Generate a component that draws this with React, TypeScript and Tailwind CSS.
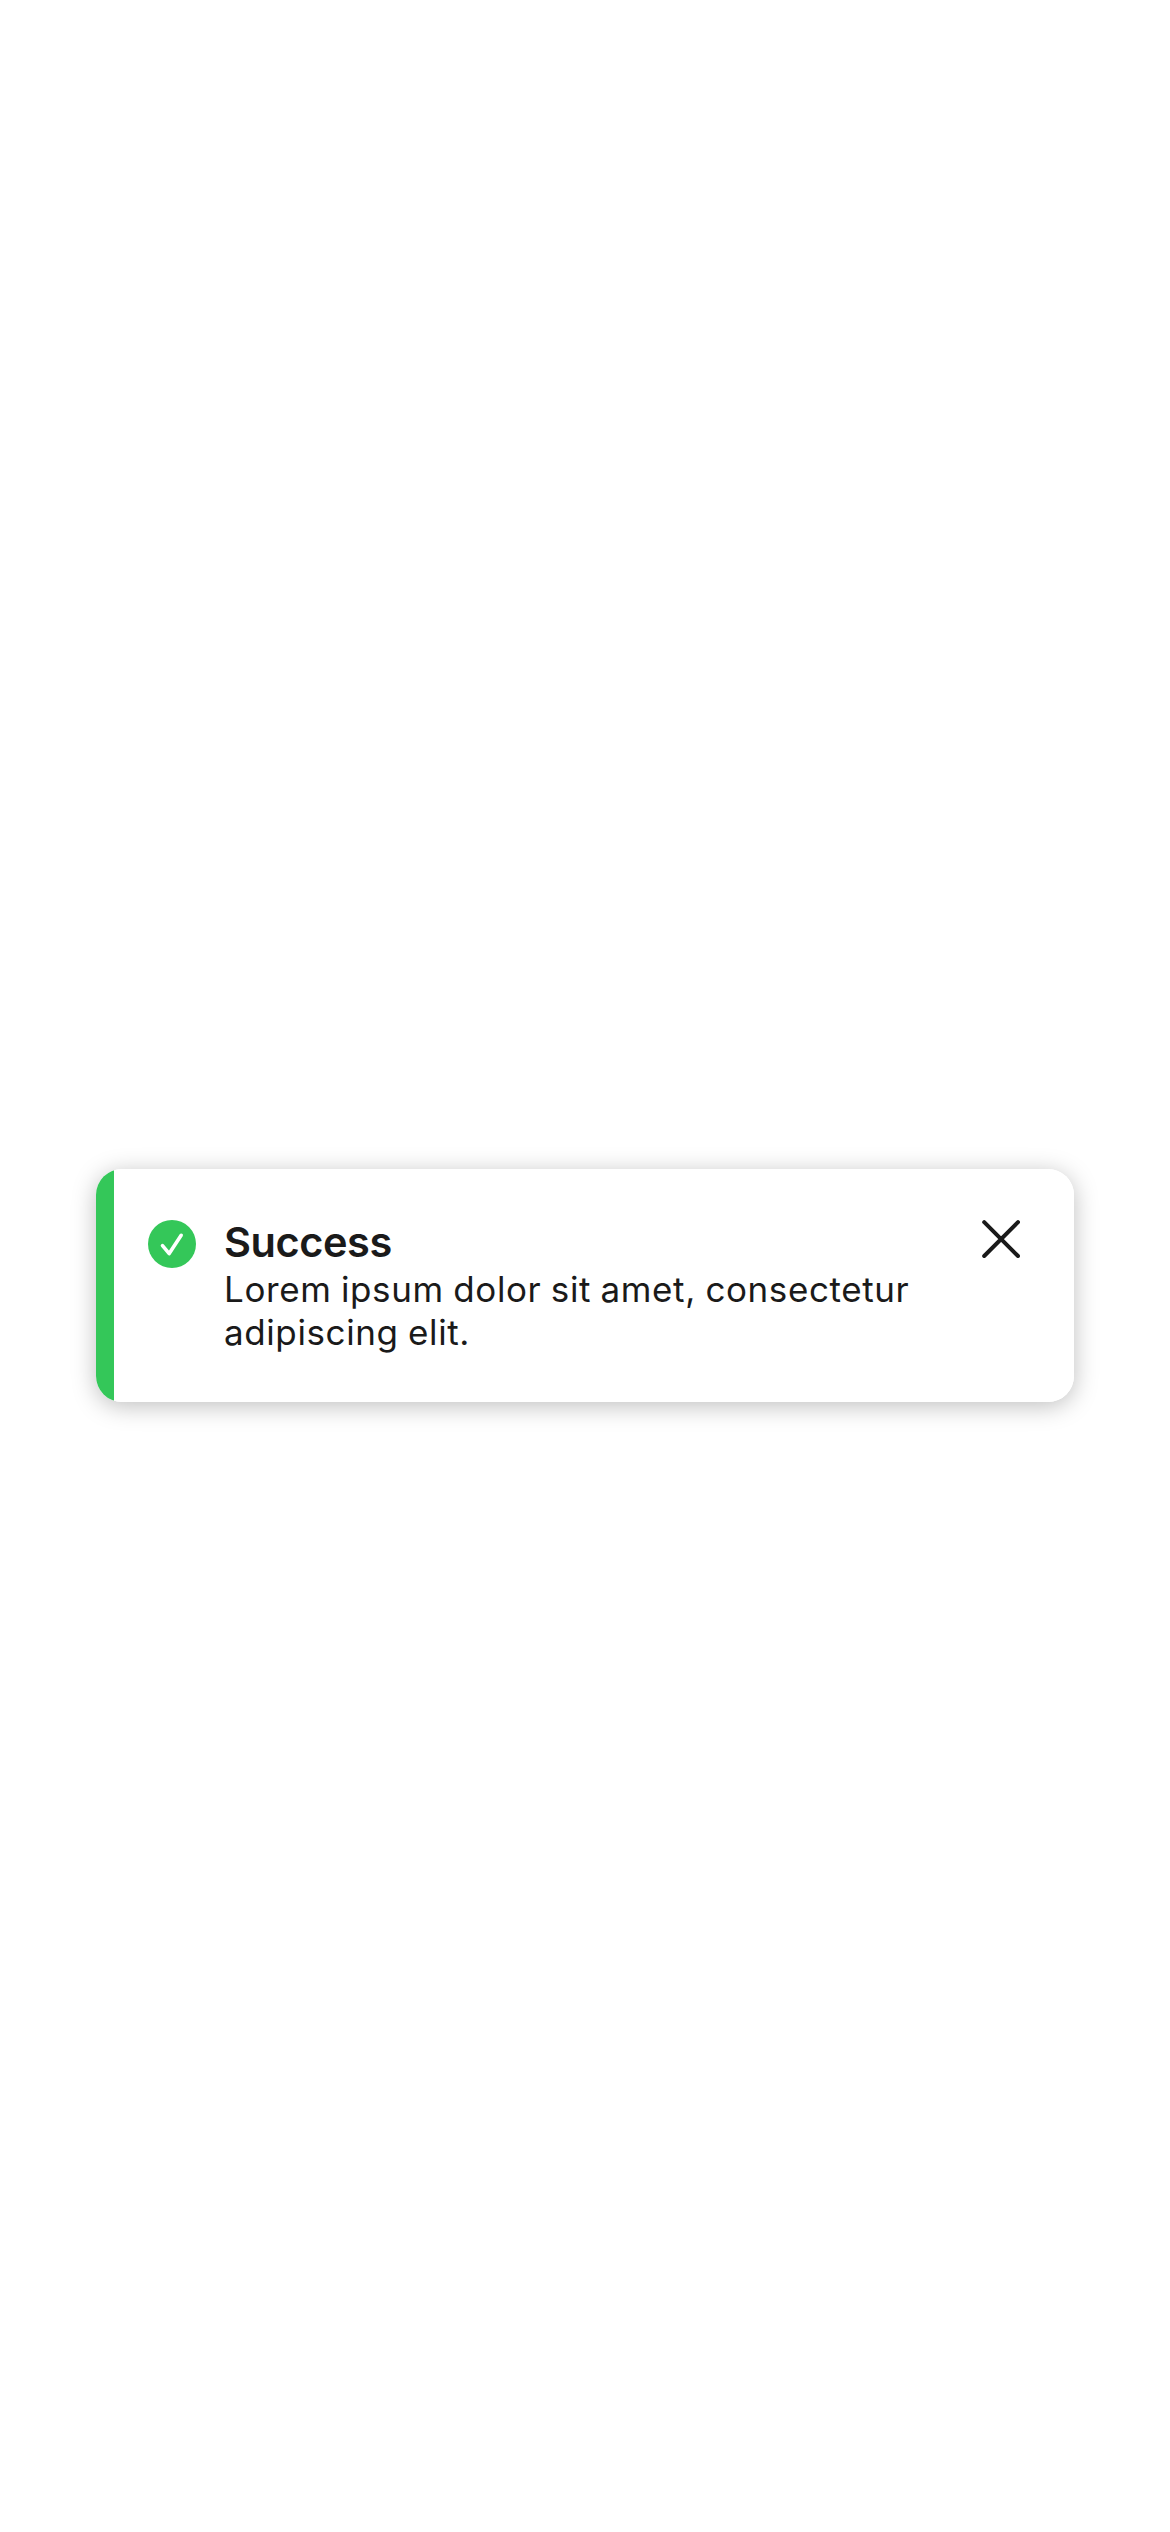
export default function App() {
  return (
    <main className="flex h-[2532px] w-[1170px] flex-col bg-white px-24 pt-[1169px] font-['Inter',sans-serif] text-[#1a1a1a]">
      <section
        role="status"
        className="h-[233px] w-[978px] rounded-[26px] shadow-[0_4px_24px_rgba(0,0,0,0.26)]"
      >
        <div className="flex h-full overflow-hidden rounded-[26px] bg-white">
          <div className="w-[18px] shrink-0 bg-[#34c759]" />
          <svg className="mt-[51px] ml-[34px] size-12 shrink-0" viewBox="0 0 48 48" fill="none">
            <circle cx="24" cy="24" r="24" fill="#34c759" />
            <path
              d="M14.5 25.7 L21.2 33.6 L33.2 15.3"
              stroke="white"
              strokeWidth="3.6"
              strokeLinecap="round"
              strokeLinejoin="round"
            />
          </svg>
          <div className="mt-[48px] ml-7 grow">
            <h1 className="h-[50px] text-[41.5px] leading-[50px] font-semibold tracking-[-0.45px] whitespace-nowrap">
              Success
            </h1>
            <p className="mt-px text-[35px] leading-[43px] tracking-[0.6px] [word-spacing:-0.9px] whitespace-nowrap">
              Lorem ipsum dolor sit amet, consectetur
              <br />
              adipiscing elit.
            </p>
          </div>
          <button aria-label="Close" className="mt-[51px] mr-[54px] size-[38px] shrink-0">
            <svg className="size-full" viewBox="0 0 38 38" fill="none">
              <path
                d="M2.2 2.2 L36 36 M36 2.2 L2.2 36"
                stroke="#1a1a1a"
                strokeWidth="4"
                strokeLinecap="round"
              />
            </svg>
          </button>
        </div>
      </section>
    </main>
  );
}
